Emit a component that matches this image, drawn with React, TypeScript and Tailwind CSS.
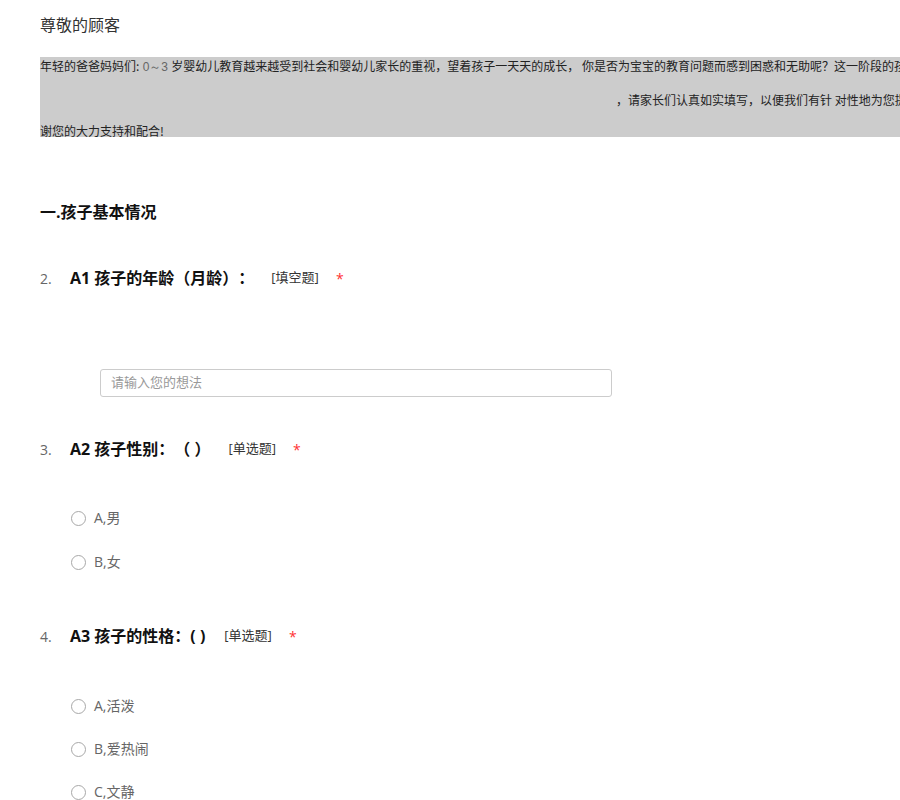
import React from "react";

const F = { fontFamily: '"Open Sans","Noto Sans CJK SC",sans-serif' };

function Radio({ label, className = "" }: { label: string; className?: string }) {
  return (
    <div className={"flex items-center h-[20px] pl-[31px] " + className}>
      <span className="w-[15px] h-[15px] rounded-full border border-[#a8a8a8] bg-white box-border" />
      <span className="ml-[8px] text-[14px] leading-[20px] text-[#666]">{label}</span>
    </div>
  );
}

function QTitle({ num, title, type, typeGap, className = "" }: { num: string; title: string; type: string; typeGap: string; className?: string }) {
  return (
    <div className={"flex items-center h-[24px] " + className}>
      <span className="w-[30px] text-[14px] text-[#666]">{num}</span>
      <span className="text-[16px] font-bold text-[#111] leading-[24px]">{title}</span>
      <span className={"text-[13px] text-[#333] " + typeGap}>{type}</span>
      <span className="ml-[17px] text-[14px] text-[#ff3333]">*</span>
    </div>
  );
}

export default function App() {
  return (
    <div className="w-[900px] h-[800px] overflow-hidden bg-white [text-spacing-trim:space-all]" style={F}>
      <div className="pl-[40px] pt-[13px]">
        <div className="text-[16px] leading-[24px] text-[#333]">尊敬的顾客</div>

        <div
          className="mt-[20px] w-[1000px] h-[80px] bg-[#cccccc] text-[12px] text-[#222] whitespace-nowrap"
          style={{ fontFamily: '"Noto Sans CJK SC","DejaVu Sans",sans-serif' }}
        >
          <div className="h-[18px] leading-[18px]">
            年轻的爸爸妈妈们:<span className="text-[#666]" style={{ fontFamily: '"Liberation Sans",sans-serif' }}> 0～3 </span>岁婴幼儿教育越来越受到社会和婴幼儿家长的重视，望着孩子一天天的成长， 你是否为宝宝的教育问题而感到困惑和无助呢？这一阶段的孩子的教育
          </div>
          <div className="mt-[16px] h-[18px] leading-[18px] pl-[576px]">
            ，请家长们认真如实填写，以便我们有针 对性地为您提供服务
          </div>
          <div className="mt-[13px] h-[18px] leading-[18px]">谢您的大力支持和配合!</div>
        </div>

        <div className="mt-[63px] text-[16px] leading-[24px] font-bold text-[#111]">一.孩子基本情况</div>

        <QTitle className="mt-[42px]" num="2." title="A1 孩子的年龄（月龄）：" type="[填空题]" typeGap="ml-[17px]" />

        <div className="mt-[79px] ml-[60px] w-[512px] h-[28px] border border-[#cccccc] rounded-[3px] flex items-center px-[10px] box-border">
          <span className="text-[13px] text-[#999]">请输入您的想法</span>
        </div>

        <QTitle className="mt-[40px]" num="3." title="A2 孩子性别：（ ）" type="[单选题]" typeGap="ml-[18px]" />
        <Radio className="mt-[47px]" label="A,男" />
        <Radio className="mt-[24px]" label="B,女" />

        <QTitle className="mt-[52px]" num="4." title="A3 孩子的性格：( )" type="[单选题]" typeGap="ml-[19px]" />
        <Radio className="mt-[48px]" label="A,活泼" />
        <Radio className="mt-[23px]" label="B,爱热闹" />
        <Radio className="mt-[23px]" label="C,文静" />
      </div>
    </div>
  );
}
